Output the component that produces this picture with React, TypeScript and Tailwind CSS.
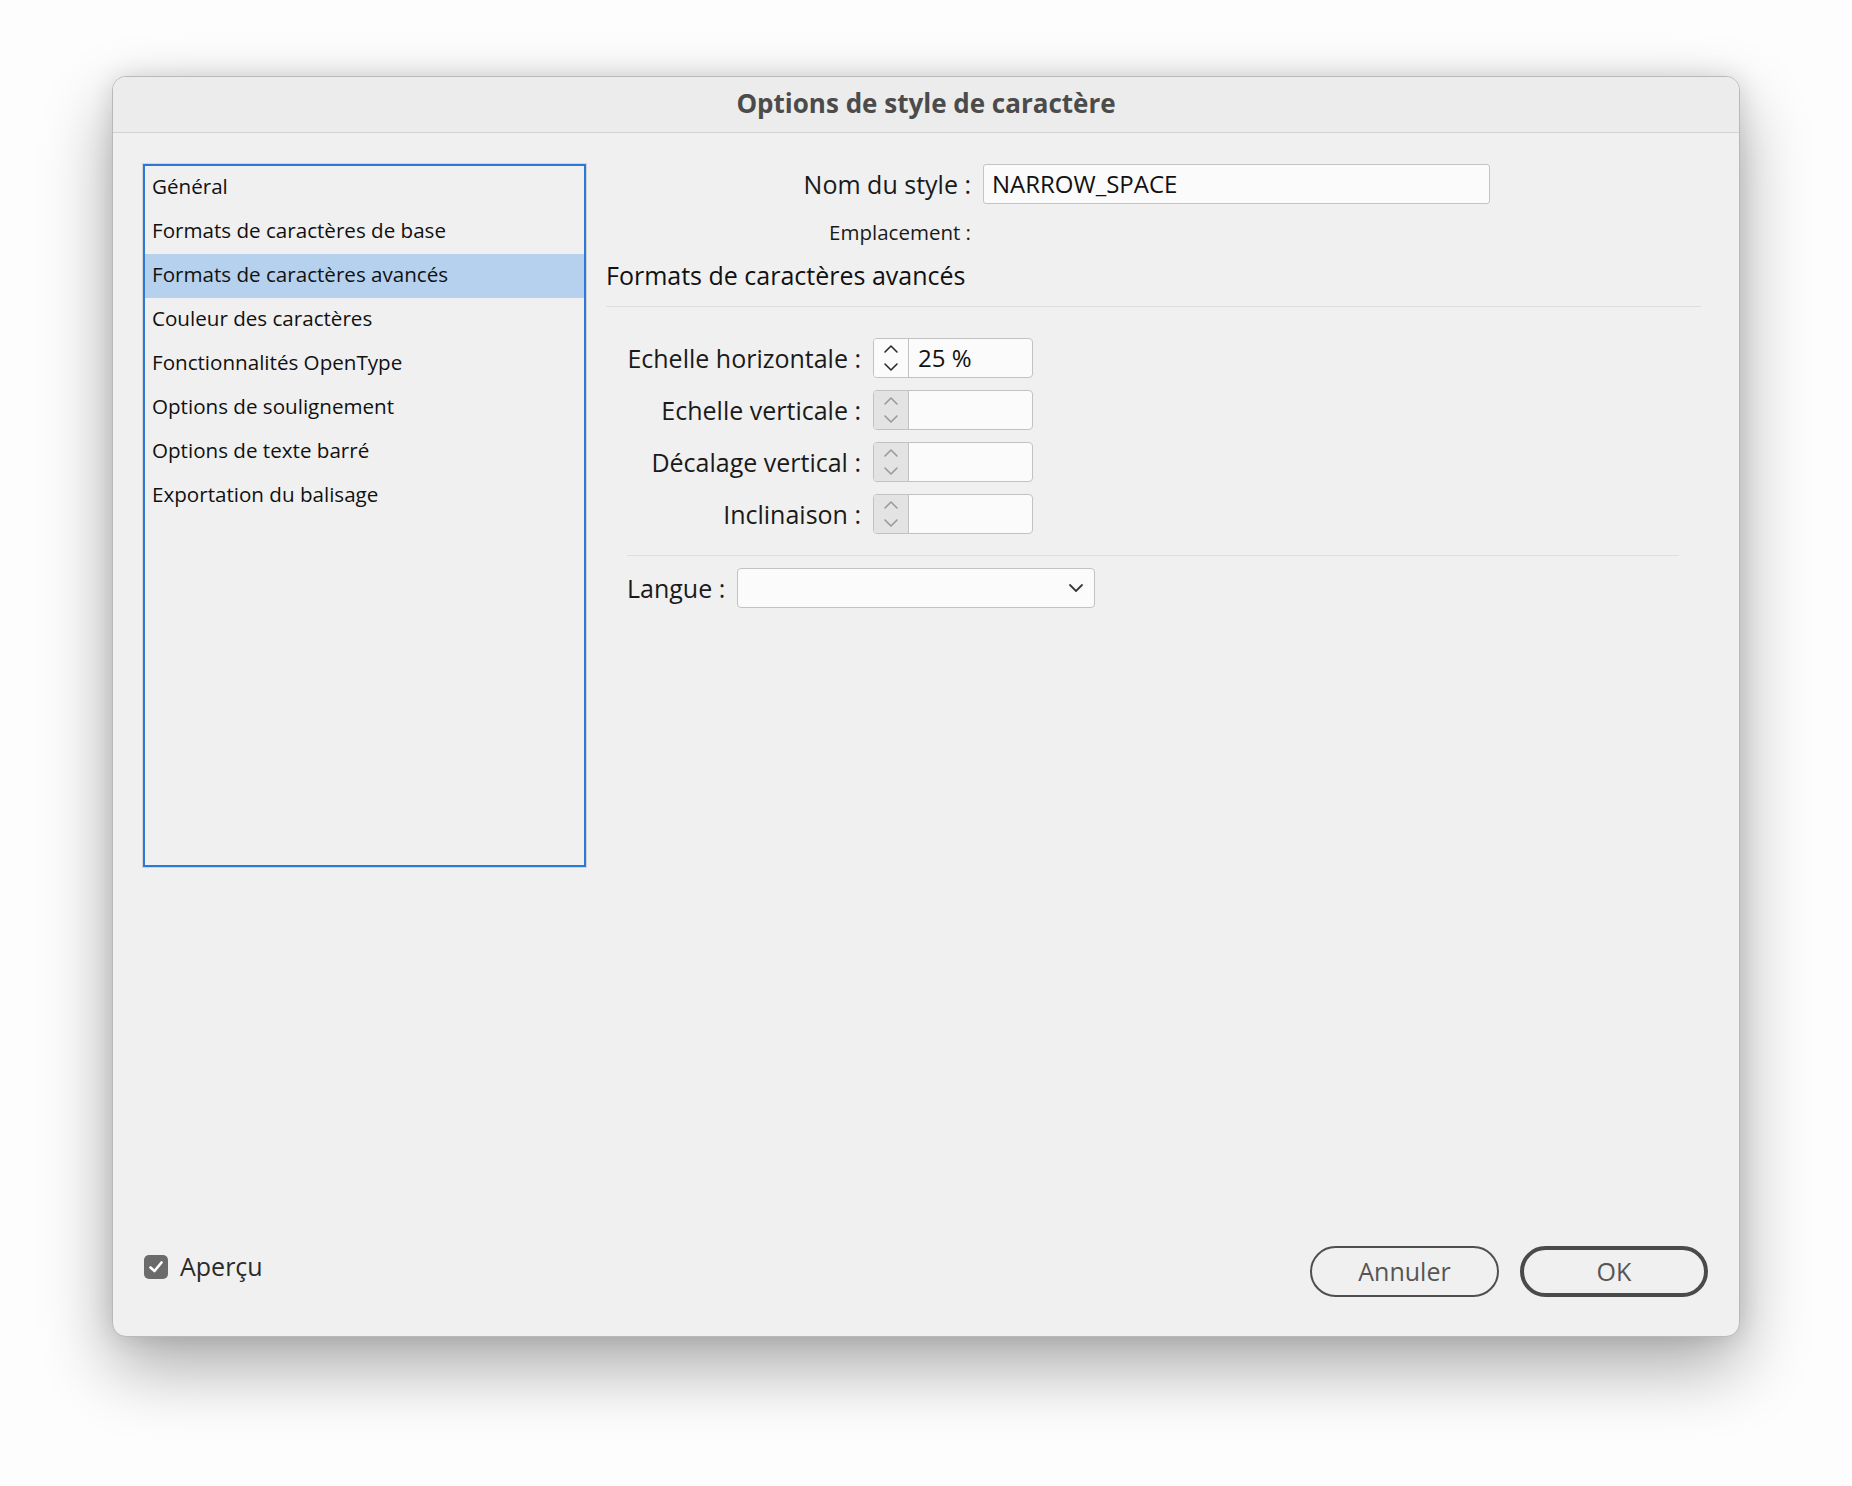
import React from "react";

const FONT = { fontFamily: "'Open Sans', 'Noto Sans', sans-serif" };

const sidebarItems = [
  "Général",
  "Formats de caractères de base",
  "Formats de caractères avancés",
  "Couleur des caractères",
  "Fonctionnalités OpenType",
  "Options de soulignement",
  "Options de texte barré",
  "Exportation du balisage",
];

const spinners = [
  { label: "Echelle horizontale :", value: "25 %", enabled: true },
  { label: "Echelle verticale :", value: "", enabled: false },
  { label: "Décalage vertical :", value: "", enabled: false },
  { label: "Inclinaison :", value: "", enabled: false },
];

function Arrows({ enabled }: { enabled: boolean }) {
  const stroke = enabled ? "#2b2b2b" : "#9a9a9a";
  return (
    <svg width="16" height="30" viewBox="0 0 16 30" fill="none">
      <polyline points="2,9 8,3 14,9" stroke={stroke} strokeWidth="1.6" strokeLinecap="round" strokeLinejoin="round" />
      <polyline points="2,21 8,27 14,21" stroke={stroke} strokeWidth="1.6" strokeLinecap="round" strokeLinejoin="round" />
    </svg>
  );
}

function Spinner({ label, value, enabled }: { label: string; value: string; enabled: boolean }) {
  return (
    <div className="flex items-center h-[40px]">
      <div className="w-[234px] text-right text-[25px] leading-none text-[#1a1a1a] whitespace-nowrap">{label}</div>
      <div className="ml-[12px] flex h-[40px] w-[160px] rounded-[4px] border-[1.5px] border-[#c2c2c2] overflow-hidden bg-[#fbfbfb]">
        <div
          className={
            enabled
              ? "w-[35px] flex items-center justify-center border-r-[1.5px] border-[#c2c2c2] bg-[#fbfbfb]"
              : "w-[35px] flex items-center justify-center border-r-[1.5px] border-[#c2c2c2] bg-[#e3e3e3]"
          }
        >
          <Arrows enabled={enabled} />
        </div>
        <div className="flex-1 flex items-center pl-[9px] text-[24px] leading-none text-[#111]">{value}</div>
      </div>
    </div>
  );
}

export default function App() {
  return (
    <div className="w-[1852px] h-[1486px] bg-[#fdfdfd] pt-[76px] pl-[112px]" style={FONT}>
      <div className="w-[1628px] h-[1261px] rounded-[14px] bg-[#f0f0f0] border border-[#b9b9b9] shadow-[0_30px_70px_rgba(0,0,0,0.33),0_0_24px_rgba(0,0,0,0.12)] flex flex-col overflow-hidden">
        {/* Title bar */}
        <div className="h-[56px] shrink-0 bg-[#ececec] border-b border-[#d2d2d2] flex items-center justify-center pb-[4px]">
          <span className="text-[26px] leading-none font-bold text-[#4b4b4b]">Options de style de caractère</span>
        </div>

        {/* Body */}
        <div className="flex-1 flex flex-col pt-[30px] pl-[29px]">
          <div className="flex">
            {/* Sidebar list */}
            <div className="w-[445px] h-[705px] border border-[#d3d3d3]">
              <div className="w-full h-full border-2 border-[#2a78d8] bg-[#f0f0f0]">
                {sidebarItems.map((item, i) => (
                  <div
                    key={item}
                    className={
                      i === 2
                        ? "h-[44px] flex items-center pl-[7px] pb-[3px] text-[20.6px] leading-none text-[#111] bg-[#b6d1ee]"
                        : "h-[44px] flex items-center pl-[7px] pb-[3px] text-[20.6px] leading-none text-[#111]"
                    }
                  >
                    {item}
                  </div>
                ))}
              </div>
            </div>

            {/* Right panel */}
            <div className="ml-[19px] w-[1095px] flex flex-col">
              <div className="flex items-center h-[40px] mt-[1px]">
                <div className="w-[365px] text-right text-[25px] leading-none text-[#1a1a1a]">Nom du style :</div>
                <div className="ml-[12px] w-[507px] h-[40px] rounded-[3px] border-[1.5px] border-[#c4c4c4] bg-[#fbfbfb] flex items-center pl-[8px] text-[24px] leading-none text-[#111]">
                  NARROW_SPACE
                </div>
              </div>
              <div className="mt-[14px] h-[28px] flex items-center">
                <div className="w-[365px] text-right text-[20.5px] leading-none text-[#1a1a1a]">Emplacement :</div>
              </div>
              <div className="mt-[14px] h-[30px] flex items-center text-[25px] leading-none text-[#111]">
                Formats de caractères avancés
              </div>
              <div className="mt-[16px] h-px bg-[#dedede]" />

              <div className="mt-[31px] pl-[21px] flex flex-col gap-[12px]">
                {spinners.map((s) => (
                  <Spinner key={s.label} {...s} />
                ))}
              </div>

              <div className="mt-[21px] ml-[21px] mr-[22px] h-px bg-[#dedede]" />

              <div className="mt-[12px] ml-[21px] flex items-center h-[40px]">
                <div className="w-[110px] text-[25px] leading-none text-[#1a1a1a]">Langue :</div>
                <div className="w-[358px] h-[40px] rounded-[4px] border-[1.5px] border-[#c2c2c2] bg-[#fbfbfb] flex items-center justify-end pr-[10px]">
                  <svg width="16" height="10" viewBox="0 0 16 10" fill="none">
                    <polyline points="2,2 8,8 14,2" stroke="#3a3a3a" strokeWidth="1.8" strokeLinecap="round" strokeLinejoin="round" />
                  </svg>
                </div>
              </div>
            </div>
          </div>

          <div className="flex-1" />

          {/* Footer */}
          <div className="flex items-center justify-between pl-[2px] pr-[31px] pb-[39px]">
            <div className="flex items-center gap-[12px] -mt-[10px]">
              <div className="w-[24px] h-[24px] rounded-[5px] bg-[#6b6b6b] flex items-center justify-center">
                <svg width="16" height="14" viewBox="0 0 16 14" fill="none">
                  <polyline points="2.5,7.5 6.5,11 13.5,2.5" stroke="#ffffff" strokeWidth="2.6" strokeLinecap="round" strokeLinejoin="round" />
                </svg>
              </div>
              <span className="text-[25px] leading-none text-[#2a2a2a]">Aperçu</span>
            </div>
            <div className="flex items-center gap-[21px]">
              <button className="w-[189px] h-[51px] rounded-full border-2 border-[#4f4f4f] text-[25px] leading-none text-[#555]">
                Annuler
              </button>
              <button className="w-[188px] h-[51px] rounded-full border-4 border-[#4a4a4a] text-[25px] leading-none text-[#555]">
                OK
              </button>
            </div>
          </div>
        </div>
      </div>
    </div>
  );
}
